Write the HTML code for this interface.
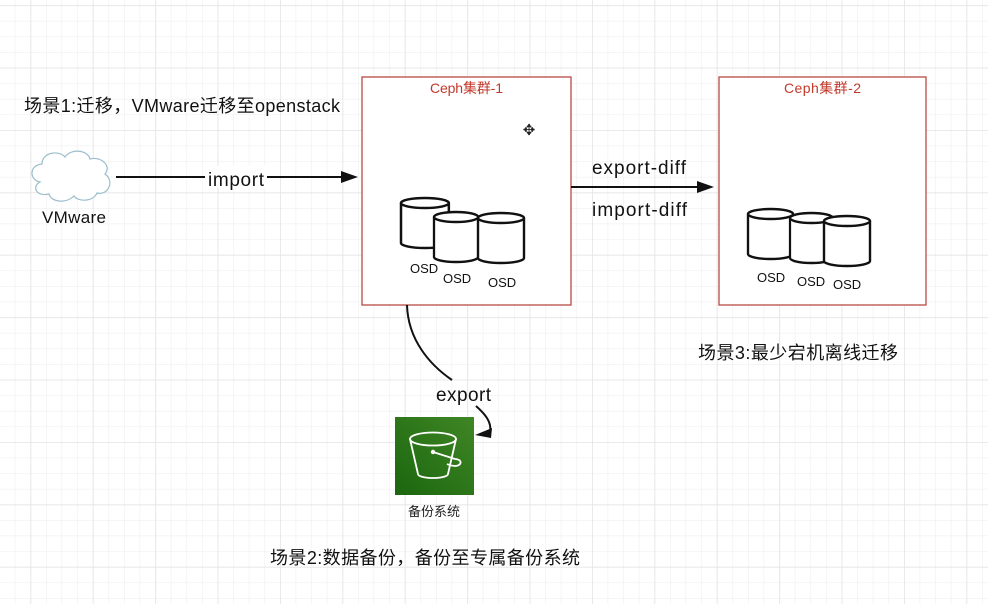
<!DOCTYPE html>
<html><head><meta charset="utf-8"><style>
html,body{margin:0;padding:0;width:988px;height:604px;overflow:hidden;background:#fff}
svg{display:block}
text{font-family:"Liberation Sans","Noto Sans CJK SC",sans-serif}
</style></head><body>
<svg width="988" height="604" viewBox="0 0 988 604" xmlns="http://www.w3.org/2000/svg">
<defs>
<pattern id="minor" x="30.4" y="5.2" width="15.6" height="15.6" patternUnits="userSpaceOnUse">
<path d="M0 0V15.6M0 0H15.6" stroke="#efefef" stroke-width="1.2" fill="none"/>
</pattern>
<pattern id="major" x="30.4" y="5.2" width="62.4" height="62.4" patternUnits="userSpaceOnUse">
<path d="M0 0V62.4M0 0H62.4" stroke="#e4e4e4" stroke-width="1.6" fill="none"/>
</pattern>
<g id="cyl">
<path d="M0 5 V45 A23 5 0 0 0 46 45 V5" fill="#fff" stroke="#111" stroke-width="2.4"/>
<ellipse cx="23" cy="5" rx="23" ry="5" fill="#fff" stroke="#111" stroke-width="2.4"/>
</g>
</defs>
<rect width="988" height="604" fill="url(#minor)"/>
<rect width="988" height="604" fill="url(#major)"/>

<text x="24" y="112" font-size="18" fill="#111" textLength="316">场景1:迁移，VMware迁移至openstack</text>

<!-- cloud -->
<path d="M40 182 C29 180 29 165 42 164 C42 152 59 150 65 157 C71 148 88 150 90 159 C101 156 112 166 105 174 C115 181 108 196 97 193 C93 202 78 202 74 196 C66 204 51 202 49 194 C37 197 31 187 40 182Z" fill="#fff" stroke="#9bbdcc" stroke-width="1.2"/>
<text x="42" y="223" font-size="17" fill="#111" textLength="64">VMware</text>

<line x1="116" y1="177" x2="345" y2="177" stroke="#111" stroke-width="2"/>
<path d="M358 177 L341 171 L341 183Z" fill="#111"/>
<rect x="205" y="166" width="62" height="22" fill="#fff"/>
<text x="208" y="186" font-size="19" fill="#111" textLength="56">import</text>

<!-- box 1 -->
<rect x="362" y="77" width="209" height="228" fill="#fff" stroke="#b94a44" stroke-width="1.3"/>
<text x="430" y="93" font-size="14" fill="#c0392b" textLength="73">Ceph集群-1</text>
<text x="529" y="135" font-size="15" fill="#222" text-anchor="middle">✥</text>
<use href="#cyl" transform="translate(401,198) scale(1.04,1)"/>
<use href="#cyl" transform="translate(434,212) scale(0.96,1)"/>
<use href="#cyl" transform="translate(478,213)"/>
<text x="410" y="273" font-size="13" fill="#111">OSD</text>
<text x="443" y="283" font-size="13" fill="#111">OSD</text>
<text x="488" y="287" font-size="13" fill="#111">OSD</text>

<!-- export-diff -->
<line x1="571" y1="187" x2="700" y2="187" stroke="#111" stroke-width="2"/>
<path d="M714 187 L697 181 L697 193Z" fill="#111"/>
<text x="592" y="174" font-size="19" fill="#111" textLength="94">export-diff</text>
<text x="592" y="216" font-size="19" fill="#111" textLength="95">import-diff</text>

<!-- box 2 -->
<rect x="719" y="77" width="207" height="228" fill="#fff" stroke="#b94a44" stroke-width="1.3"/>
<text x="784" y="93" font-size="14" fill="#c0392b" textLength="77">Ceph集群-2</text>
<use href="#cyl" transform="translate(748,209) scale(0.98,1)"/>
<use href="#cyl" transform="translate(790,213) scale(0.93,1)"/>
<use href="#cyl" transform="translate(824,216)"/>
<text x="757" y="282" font-size="13" fill="#111">OSD</text>
<text x="797" y="286" font-size="13" fill="#111">OSD</text>
<text x="833" y="289" font-size="13" fill="#111">OSD</text>

<text x="698" y="359" font-size="18" fill="#111" textLength="200">场景3:最少宕机离线迁移</text>

<!-- export curve -->
<path d="M407 305 C408 340 430 365 452 380" fill="none" stroke="#111" stroke-width="2"/>
<path d="M476 406 C485 414 492 422 490 432" fill="none" stroke="#111" stroke-width="2"/>
<path d="M475 435 L492 428 L491 438Z" fill="#111"/>
<text x="436" y="401" font-size="19" fill="#111" textLength="55">export</text>

<!-- bucket -->
<defs><linearGradient id="g" x1="0" y1="1" x2="1" y2="0"><stop offset="0" stop-color="#1b660f"/><stop offset="1" stop-color="#3f8624"/></linearGradient></defs>
<rect x="395" y="417" width="79" height="78" fill="url(#g)"/>
<g fill="none" stroke="#fff" stroke-width="1.8">
<ellipse cx="433" cy="439" rx="23" ry="6.5"/>
<path d="M410 439 L418 474 A15 4 0 0 0 448 474 L456 439"/>
<path d="M433 452 L455 459 A4 2.5 0 0 1 455 466 A14 5 0 0 1 447 464"/>
</g>
<circle cx="433" cy="452" r="2.2" fill="#fff"/>
<text x="434" y="516" font-size="13" fill="#222" text-anchor="middle">备份系统</text>

<text x="270" y="564" font-size="18" fill="#111" textLength="310">场景2:数据备份，备份至专属备份系统</text>
</svg>
</body></html>
